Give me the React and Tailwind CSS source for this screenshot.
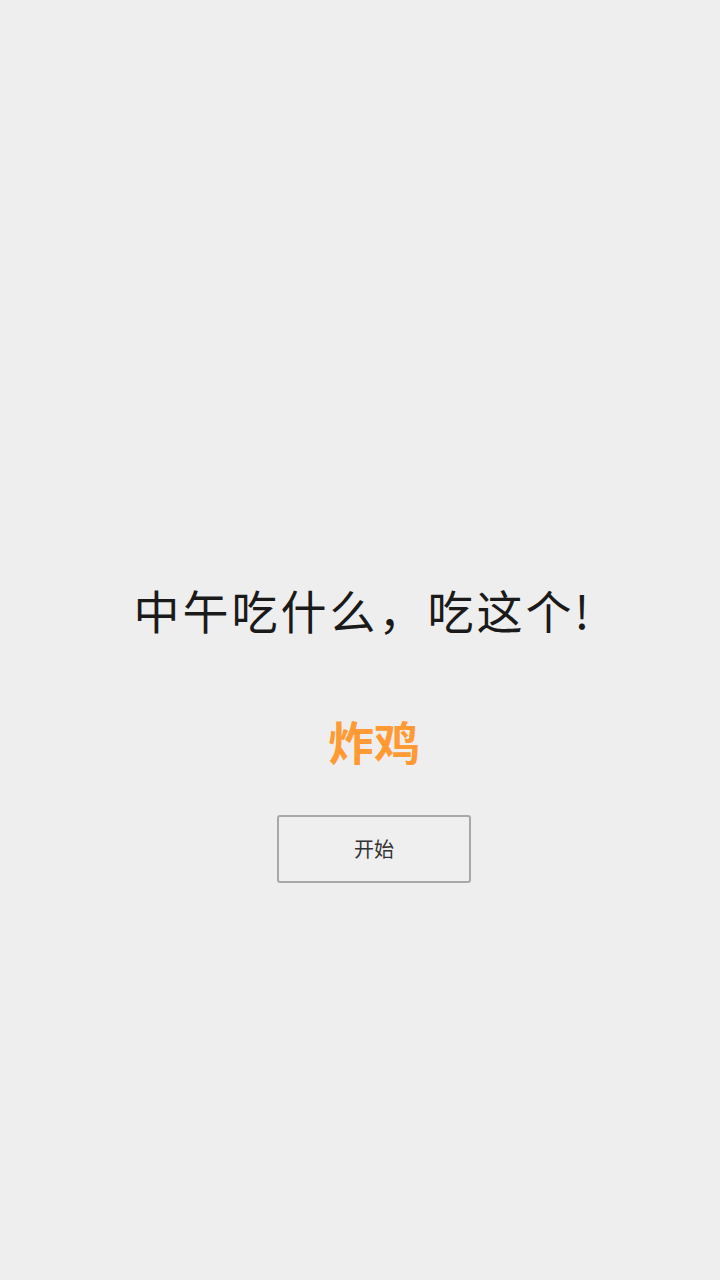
export default function App() {
  return (
    <div
      className="min-h-[1280px] w-full bg-[#eeeeee] flex flex-col items-center"
      style={{ fontFamily: '"Noto Sans CJK SC", "Noto Sans", sans-serif' }}
    >
      <h1 className="mt-[577px] pl-[6px] text-[46px] leading-[64px] font-normal text-[#1a1a1a] tracking-[3px]">
        中午吃什么，吃这个!
      </h1>
      <div className="mt-[69px] pl-[28px] text-[46px] leading-[60px] font-bold text-[#ff9a35]">
        炸鸡
      </div>
      <button
        type="button"
        className="mt-[45px] ml-[28px] w-[194px] h-[68px] rounded-[3px] border-2 border-[#a8a8a8] bg-[#efefef] text-[20px] text-[#333333]"
      >
        开始
      </button>
    </div>
  );
}
